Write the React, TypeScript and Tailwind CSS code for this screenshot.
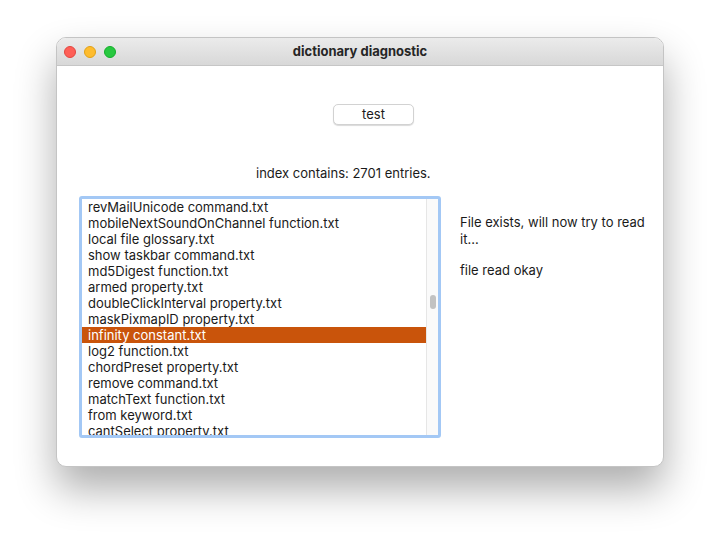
const ROWS = [
  'revMailUnicode command.txt',
  'mobileNextSoundOnChannel function.txt',
  'local file glossary.txt',
  'show taskbar command.txt',
  'md5Digest function.txt',
  'armed property.txt',
  'doubleClickInterval property.txt',
  'maskPixmapID property.txt',
  'infinity constant.txt',
  'log2 function.txt',
  'chordPreset property.txt',
  'remove command.txt',
  'matchText function.txt',
  'from keyword.txt',
  'cantSelect property.txt',
];

const SELECTED = 'infinity constant.txt';

export default function App() {
  return (
    <div
      className="w-[719px] h-[540px] bg-white pt-[37px] pl-[56px] overflow-hidden"
      style={{ fontFamily: 'Inter, "Liberation Sans", sans-serif' }}
    >
      <div className="w-[608px] h-[430px] rounded-[10px] bg-white flex flex-col overflow-hidden border border-[#c4c4c4] shadow-[0_22px_40px_rgba(0,0,0,0.32)]">
        {/* Title bar */}
        <div className="h-[28px] flex-shrink-0 flex items-center relative bg-gradient-to-b from-[#ebebeb] to-[#d8d8d8] border-b border-[#c6c6c6]">
          <div className="flex items-center gap-[8px] pl-[7px]">
            <div className="w-[12px] h-[12px] rounded-full bg-[#fe5f57] border border-[#e2463f]" />
            <div className="w-[12px] h-[12px] rounded-full bg-[#febc2e] border border-[#e1a116]" />
            <div className="w-[12px] h-[12px] rounded-full bg-[#28c840] border border-[#14ae2a]" />
          </div>
          <p className="absolute inset-0 flex items-center justify-center text-[13px] font-bold text-[#262626]">
            dictionary diagnostic
          </p>
        </div>

        {/* Content */}
        <div className="flex-1 flex flex-col">
          <div className="pt-[38px] pl-[276px]">
            <button className="w-[81px] h-[21px] rounded-[5px] bg-white border border-[#d2d2d2] shadow-[0_1px_1px_rgba(0,0,0,0.15)] text-[13px] text-[#1a1a1a] flex items-center justify-center">
              test
            </button>
          </div>

          <p className="mt-[40px] pl-[199px] text-[13px] leading-[16px] text-[#1a1a1a]">
            index contains: 2701 entries.
          </p>

          <div className="mt-[15px] flex">
            {/* List */}
            <div className="ml-[22px] w-[362px] h-[242px] rounded-[3px] border-[3px] border-[#a3c8f5] flex overflow-hidden">
              <div className="flex-1 overflow-hidden">
                {ROWS.map(r => (
                  <div
                    key={r}
                    className={`h-[16px] pl-[6px] text-[13px] leading-[16px] whitespace-nowrap ${
                      r === SELECTED ? 'bg-[#c9540b] text-white' : 'text-[#1a1a1a]'
                    }`}
                  >
                    {r}
                  </div>
                ))}
              </div>
              <div className="w-[12px] flex-shrink-0 bg-[#fafafa] border-l border-[#e6e6e6] pt-[96px] flex justify-center">
                <div className="w-[6px] h-[14px] rounded-full bg-[#c2c2c2]" />
              </div>
            </div>

            {/* Status text */}
            <div className="ml-[19px] pt-[18px] w-[190px] text-[13px] leading-[17px] text-[#1a1a1a]">
              <p>File exists, will now try to read it...</p>
              <p className="mt-[14px]">file read okay</p>
            </div>
          </div>
        </div>
      </div>
    </div>
  );
}
